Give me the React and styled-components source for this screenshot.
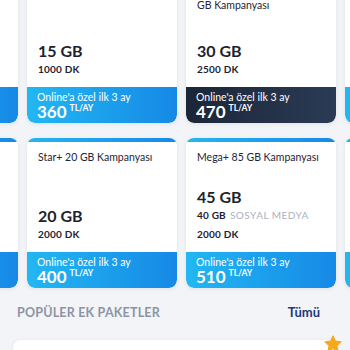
import React from 'react';
import styled, { createGlobalStyle } from 'styled-components';

const GlobalStyle = createGlobalStyle`
  html, body {
    margin: 0;
    padding: 0;
    background: #f3f4f7;
    font-family: Lato, "Open Sans", Arial, sans-serif;
    overflow: hidden;
  }
`;

const rows = [
  [
    { title: 'Star+ 10 GB Kampanyası', gb: '10 GB', dk: '750 DK', price: '290', theme: 'blue' },
    { title: 'Star+ 15 GB Kampanyası', gb: '15 GB', dk: '1000 DK', price: '360', theme: 'blue' },
    { title: 'Mega+ Sınırsız Sosyal 30 GB Kampanyası', gb: '30 GB', dk: '2500 DK', price: '470', theme: 'dark' },
    { title: 'Mega+ 50 GB Kampanyası', gb: '50 GB', dk: '3000 DK', price: '560', theme: 'blue' },
  ],
  [
    { title: 'Star+ 12 GB Kampanyası', gb: '12 GB', dk: '1000 DK', price: '330', theme: 'blue' },
    { title: 'Star+ 20 GB Kampanyası', gb: '20 GB', dk: '2000 DK', price: '400', theme: 'blue' },
    { title: 'Mega+ 85 GB Kampanyası', gb: '45 GB', social: '40 GB', dk: '2000 DK', price: '510', theme: 'blue' },
    { title: 'Mega+ 100 GB Kampanyası', gb: '60 GB', dk: '3000 DK', price: '620', theme: 'blue' },
  ],
];

const Page = styled.div`
  width: 350px;
  height: 350px;
  overflow: hidden;
`;

// the list is scrolled a little, so the first row's top is above the window
const Scrolled = styled.div`
  margin-top: -27px;
  display: flex;
  flex-direction: column;
  gap: 15px;
`;

const Row = styled.div`
  display: flex;
  gap: 9px;
  margin-left: -132px;
`;

const Card = styled.div`
  flex: 0 0 150px;
  height: 150px;
  background: #fff;
  border-radius: 8px;
  box-shadow: 0 1px 4px rgba(30, 40, 60, 0.09);
  display: flex;
  flex-direction: column;
  overflow: hidden;
`;

const TopBar = styled.div`
  height: 4px;
  background: linear-gradient(90deg, #22b7f2, #1689e6);
`;

const Body = styled.div`
  flex: 1;
  padding: 9px 11px 8px;
  display: flex;
  flex-direction: column;
`;

const Title = styled.div`
  font-size: 10.5px;
  line-height: 13px;
  color: #1f2533;
`;

const Data = styled.div`
  margin-top: auto;
  display: flex;
  flex-direction: column;
`;

const Gb = styled.div`
  font-size: 16px;
  font-weight: 700;
  color: #1c2230;
  line-height: 19px;
`;

const Line = styled.div`
  font-size: 10px;
  font-weight: 700;
  color: #1c2230;
  line-height: 19px;
  letter-spacing: 0.2px;
`;

const Social = styled.span`
  font-weight: 400;
  color: #a9b1be;
  letter-spacing: 0.5px;
  margin-left: 4px;
`;

const Footer = styled.div`
  height: 36px;
  padding: 4px 10px 0;
  box-sizing: border-box;
  color: #fff;
  border-radius: 0 0 8px 8px;
  background: ${p => p.$theme === 'dark'
    ? 'linear-gradient(90deg, #1b2638, #2b3b55)'
    : 'linear-gradient(90deg, #22b7f2, #1689e6)'};
`;

const Promo = styled.div`
  font-size: 10.5px;
  line-height: 12px;
`;

const Price = styled.div`
  display: flex;
  align-items: flex-start;
  gap: 3px;
  font-size: 17px;
  font-weight: 700;
  line-height: 18px;
`;

const Unit = styled.span`
  font-size: 8.5px;
  line-height: 11px;
  font-weight: 700;
`;

const SectionHead = styled.div`
  display: flex;
  justify-content: space-between;
  align-items: center;
  padding: 12px 30px 0 17px;
  height: 24px;
`;

const SectionTitle = styled.div`
  font-size: 12.5px;
  font-weight: 700;
  letter-spacing: 0.2px;
  color: #8b94a5;
`;

const More = styled.div`
  font-size: 13px;
  font-weight: 700;
  color: #1c3a7c;
`;

const ExtraCard = styled.div`
  position: relative;
  margin: 16px 13px 0;
  height: 40px;
  background: #fff;
  border-radius: 8px;
  box-shadow: 0 1px 4px rgba(30, 40, 60, 0.08);
`;

const Star = styled.svg`
  position: absolute;
  right: -6px;
  top: -6px;
  width: 20px;
  height: 20px;
`;

const PlanCard = ({ plan }) => (
  <Card>
    <TopBar />
    <Body>
      <Title>{plan.title}</Title>
      <Data>
        <Gb>{plan.gb}</Gb>
        {plan.social && (
          <Line>
            {plan.social}
            <Social>SOSYAL MEDYA</Social>
          </Line>
        )}
        <Line>{plan.dk}</Line>
      </Data>
    </Body>
    <Footer $theme={plan.theme}>
      <Promo>Online'a özel ilk 3 ay</Promo>
      <Price>
        {plan.price}
        <Unit>TL/AY</Unit>
      </Price>
    </Footer>
  </Card>
);

export default function App() {
  return (
    <Page>
      <GlobalStyle />
      <Scrolled>
        {rows.map((row, i) => (
          <Row key={i}>
            {row.map(plan => <PlanCard key={plan.title} plan={plan} />)}
          </Row>
        ))}
      </Scrolled>
      <SectionHead>
        <SectionTitle>POPÜLER EK PAKETLER</SectionTitle>
        <More>Tümü</More>
      </SectionHead>
      <ExtraCard>
        <Star viewBox="0 0 24 24">
          <path
            d="M12 2.5l2.9 6.1 6.6.8-4.9 4.6 1.3 6.6L12 17.3l-5.9 3.3 1.3-6.6-4.9-4.6 6.6-.8z"
            fill="#f5a91e"
            stroke="#f5a91e"
            strokeWidth="1.5"
            strokeLinejoin="round"
          />
        </Star>
      </ExtraCard>
    </Page>
  );
}
